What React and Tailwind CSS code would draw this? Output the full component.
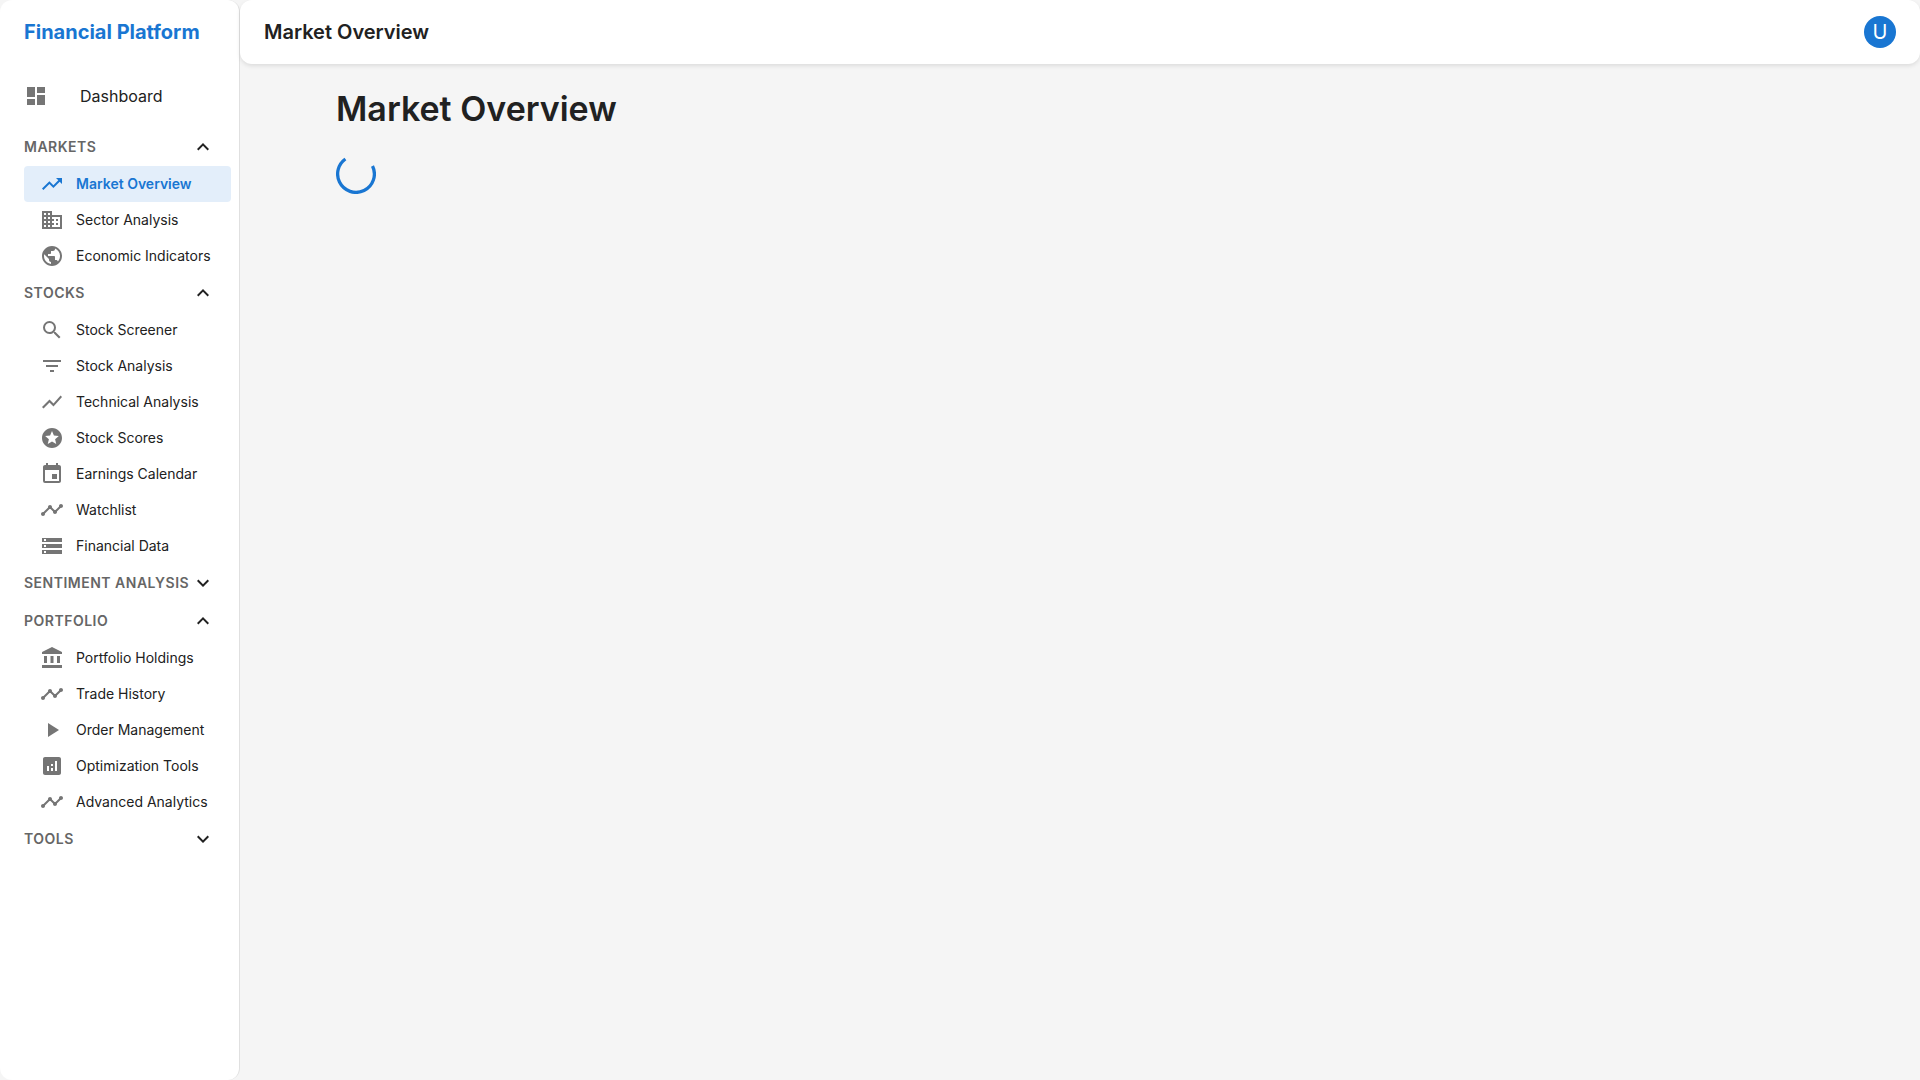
import { useState } from 'react';
import {
  MdAccountBalance,
  MdAnalytics,
  MdBusiness,
  MdDashboard,
  MdEvent,
  MdExpandLess,
  MdExpandMore,
  MdFilterList,
  MdPlayArrow,
  MdPublic,
  MdSearch,
  MdShowChart,
  MdStars,
  MdStorage,
  MdTimeline,
  MdTrendingUp,
} from 'react-icons/md';

const sections = [
  {
    title: 'Markets',
    open: true,
    items: [
      { label: 'Market Overview', icon: MdTrendingUp },
      { label: 'Sector Analysis', icon: MdBusiness },
      { label: 'Economic Indicators', icon: MdPublic },
    ],
  },
  {
    title: 'Stocks',
    open: true,
    items: [
      { label: 'Stock Screener', icon: MdSearch },
      { label: 'Stock Analysis', icon: MdFilterList },
      { label: 'Technical Analysis', icon: MdShowChart },
      { label: 'Stock Scores', icon: MdStars },
      { label: 'Earnings Calendar', icon: MdEvent },
      { label: 'Watchlist', icon: MdTimeline },
      { label: 'Financial Data', icon: MdStorage },
    ],
  },
  { title: 'Sentiment Analysis', open: false, items: [] },
  {
    title: 'Portfolio',
    open: true,
    items: [
      { label: 'Portfolio Holdings', icon: MdAccountBalance },
      { label: 'Trade History', icon: MdTimeline },
      { label: 'Order Management', icon: MdPlayArrow },
      { label: 'Optimization Tools', icon: MdAnalytics },
      { label: 'Advanced Analytics', icon: MdTimeline },
    ],
  },
  { title: 'Tools', open: false, items: [] },
];

function NavItem({ label, icon: Icon, active }) {
  return (
    <li>
      <a
        href="#"
        aria-current={active ? 'page' : undefined}
        className={
          active
            ? 'flex h-9 items-center gap-3 rounded bg-[#1976d2]/12 px-4 text-sm font-semibold text-[#1976d2]'
            : 'flex h-9 items-center gap-3 rounded px-4 text-sm text-[#212121] hover:bg-black/5'
        }
      >
        <Icon aria-hidden="true" className={active ? 'size-6 shrink-0' : 'size-6 shrink-0 text-[#757575]'} />
        <span className="whitespace-nowrap">{label}</span>
      </a>
    </li>
  );
}

function NavSection({ title, items, open: initiallyOpen }) {
  const [open, setOpen] = useState(initiallyOpen);
  const Chevron = open ? MdExpandLess : MdExpandMore;
  return (
    <section>
      <button
        type="button"
        aria-expanded={open}
        onClick={() => setOpen(!open)}
        className="flex h-[38px] w-full items-center justify-between px-6 text-sm font-semibold tracking-[0.5px] whitespace-nowrap text-[#666666] uppercase"
      >
        {title}
        <Chevron aria-hidden="true" className="size-6 shrink-0 text-[#212121]" />
      </button>
      {open && items.length > 0 && (
        <ul className="mr-2 ml-6">
          {items.map((item) => (
            <NavItem key={item.label} {...item} active={item.label === 'Market Overview'} />
          ))}
        </ul>
      )}
    </section>
  );
}

function Spinner() {
  return (
    <svg role="progressbar" aria-label="Loading" viewBox="22 22 44 44" className="size-10 text-[#1976d2]">
      <circle
        cx="44"
        cy="44"
        r="20.2"
        fill="none"
        stroke="currentColor"
        strokeWidth="3.6"
        strokeDasharray="91.2 200"
        transform="rotate(-26 44 44)"
      />
    </svg>
  );
}

export default function App() {
  return (
    <div className="flex min-h-screen bg-[#f5f5f5] font-['Inter','Roboto',sans-serif] text-[#212121]">
      <aside className="w-60 shrink-0 rounded-xl border-r border-black/12 bg-white">
        <div className="flex h-16 items-center px-6 text-xl font-bold whitespace-nowrap text-[#1976d2]">
          Financial Platform
        </div>
        <nav className="py-2">
          <a href="#" className="mb-2 flex h-12 items-center gap-8 px-6 text-base hover:bg-black/5">
            <MdDashboard aria-hidden="true" className="size-6 text-[#757575]" />
            Dashboard
          </a>
          {sections.map((section) => (
            <NavSection key={section.title} {...section} />
          ))}
        </nav>
      </aside>

      <div className="flex min-w-0 grow flex-col">
        <header className="flex h-16 items-center justify-between rounded-xl bg-white px-6 shadow-[0_2px_4px_rgba(0,0,0,0.1)]">
          <div className="text-xl font-semibold">Market Overview</div>
          <button
            type="button"
            aria-label="Account"
            className="flex size-8 items-center justify-center rounded-full bg-[#1976d2] text-xl leading-none text-white"
          >
            U
          </button>
        </header>
        <main className="mx-auto w-full max-w-[1536px] px-6 py-6">
          <h1 className="mb-6 text-[34px] leading-[42px] font-semibold">Market Overview</h1>
          <Spinner />
        </main>
      </div>
    </div>
  );
}
